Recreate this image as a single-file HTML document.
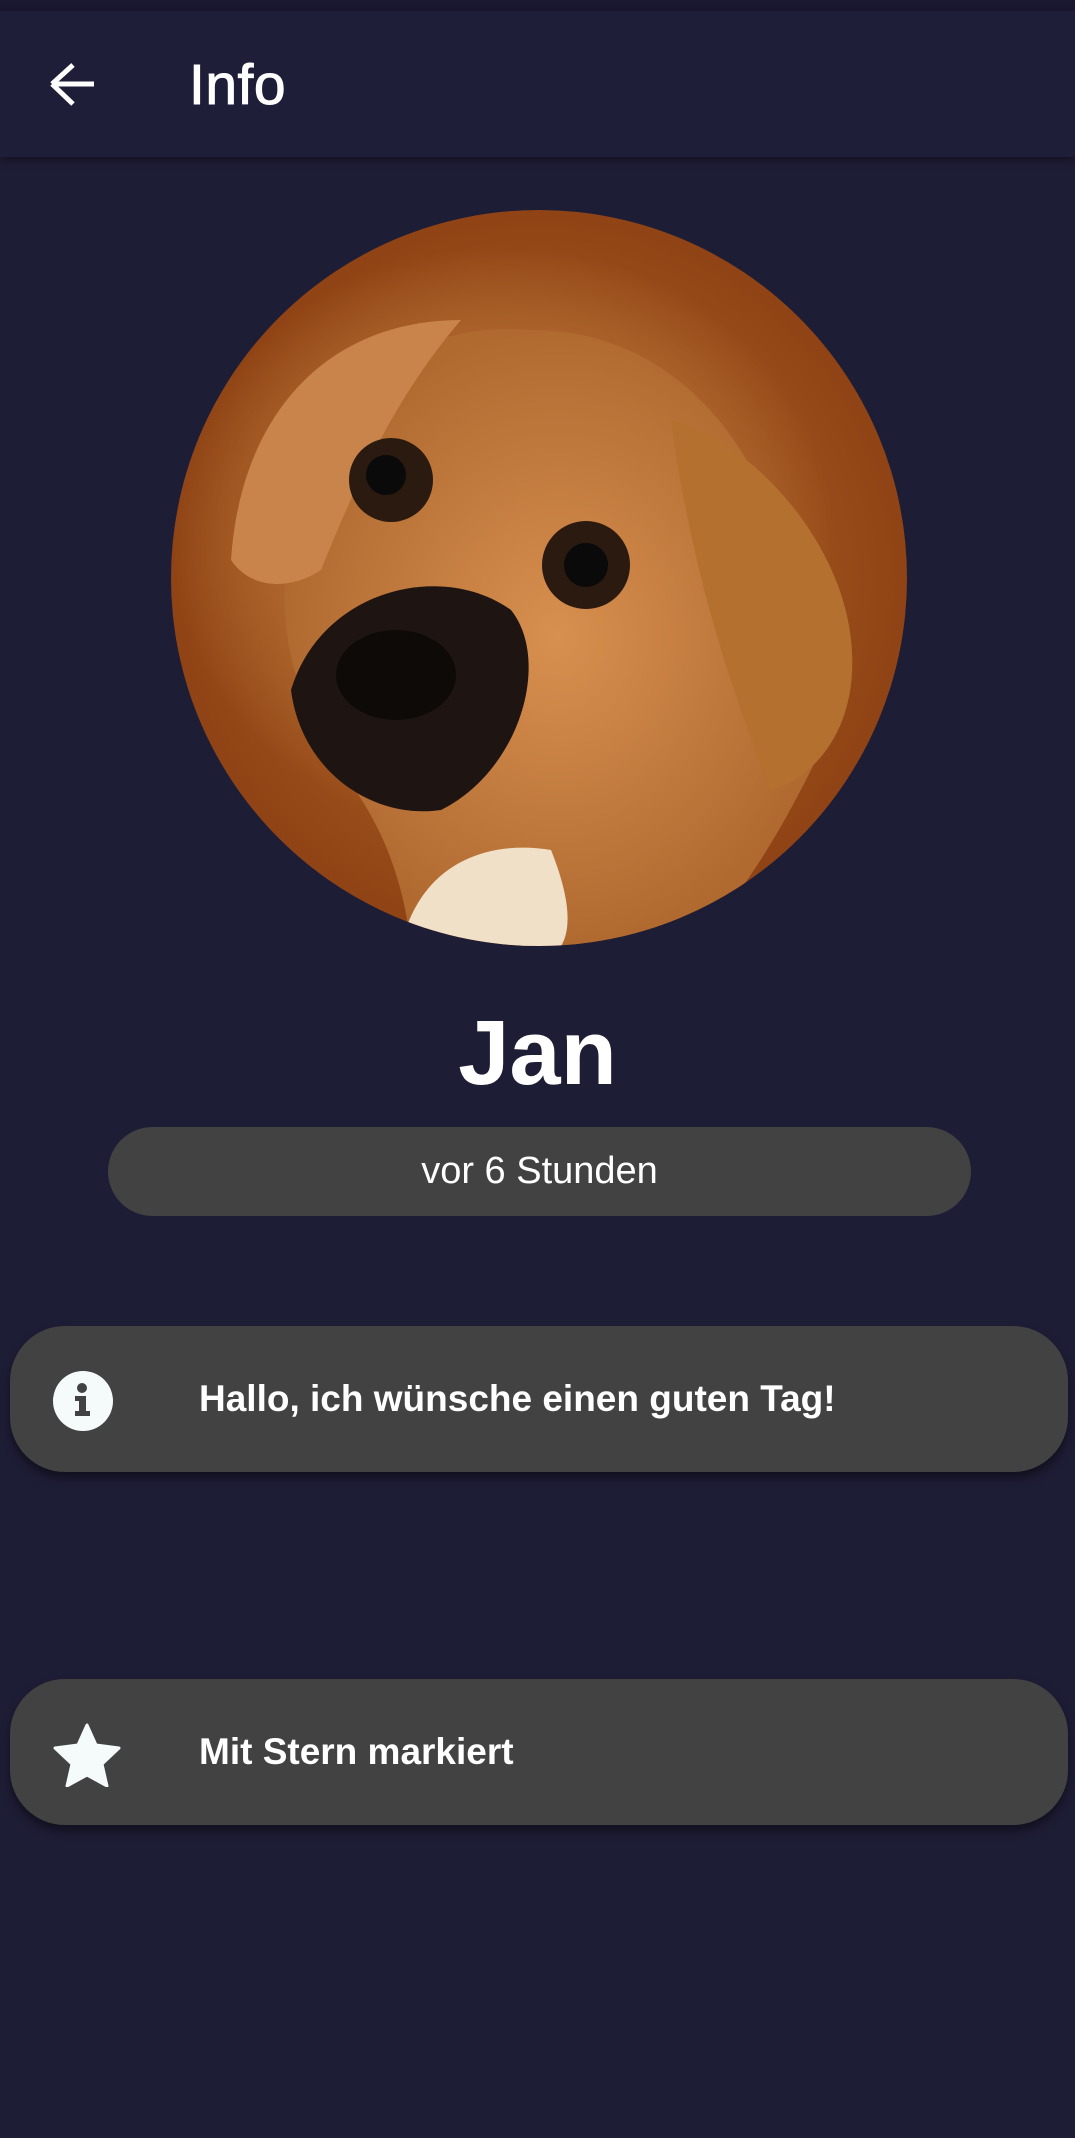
<!DOCTYPE html>
<html><head><meta charset="utf-8"><style>
*{margin:0;padding:0;box-sizing:border-box}
body{width:1075px;height:2138px;background:#1e1d36;font-family:"Liberation Sans",Roboto,sans-serif;color:#fff;position:relative;overflow:hidden}
.status{position:absolute;left:0;top:0;width:1075px;height:11px;background:#191830}
.bar{position:absolute;left:0;top:11px;width:1075px;height:146px;background:#1f1e38;box-shadow:0 4px 8px rgba(0,0,0,.35)}
.title{position:absolute;left:189px;top:39px;font-size:57px;line-height:70px;font-weight:500;letter-spacing:.5px;-webkit-text-stroke:1px #fff}
.circle{position:absolute;left:171px;top:210px;width:736px;height:736px;border-radius:50%;overflow:hidden;
background:radial-gradient(ellipse 45% 40% at 45% 45%,#c07a3e 0%,#b06a30 60%,transparent 100%),radial-gradient(circle at 50% 50%,#b86c2c,#8a3e12 80%)}
.name{position:absolute;left:0;width:1075px;top:1003px;text-align:center;font-size:92px;font-weight:bold;line-height:100px}
.pill{position:absolute;left:108px;top:1127px;width:863px;height:89px;border-radius:45px;background:#424242;text-align:center;font-size:38px;line-height:89px}
.card{position:absolute;left:10px;width:1058px;height:146px;border-radius:55px;background:#424242;box-shadow:0 6px 10px rgba(0,0,0,.45)}
.card span{position:absolute;left:189px;top:0;line-height:146px;font-size:37px;font-weight:bold}
</style></head><body>
<div class="status"></div>
<div class="bar">
<svg style="position:absolute;left:48px;top:52px" width="50" height="46" viewBox="0 0 50 46"><path d="M4 21H46M4 21L25 2M4 21L25 41" stroke="#fff" stroke-width="5" fill="none"/></svg>
<div class="title">Info</div>
</div>
<div class="circle">
<svg width="736" height="736" viewBox="0 0 736 736">
<defs><radialGradient id="g" cx="50%" cy="50%" r="50%"><stop offset="0" stop-color="#d89050"/><stop offset="1" stop-color="#b06a30"/></radialGradient></defs>
<path d="M120 330 C150 170 250 110 360 120 C480 120 560 200 600 300 C650 360 680 480 640 560 C600 640 560 700 520 736 L240 736 C230 650 200 600 170 560 C130 500 100 420 120 330Z" fill="url(#g)"/>
<path d="M60 350 C70 200 160 110 290 110 C230 180 190 260 150 360 C120 380 80 380 60 350Z" fill="#c8844a"/>
<path d="M500 210 C580 230 670 330 680 430 C690 520 640 570 600 580 C560 480 520 360 500 210Z" fill="#b4702e"/>
<ellipse cx="220" cy="270" rx="42" ry="42" fill="#2a1a10"/><ellipse cx="215" cy="265" rx="20" ry="20" fill="#0a0a0a"/>
<ellipse cx="415" cy="355" rx="44" ry="44" fill="#2a1a10"/><ellipse cx="415" cy="355" rx="22" ry="22" fill="#0a0a0a"/>
<path d="M120 480 C150 380 270 350 340 400 C380 450 350 560 270 600 C200 610 130 560 120 480Z" fill="#1e1512"/>
<ellipse cx="225" cy="465" rx="60" ry="45" fill="#0e0a08"/>
<path d="M230 736 C250 650 320 630 380 640 C400 690 400 720 390 736Z" fill="#f0e0c8"/>
</svg>
</div>
<div class="name">Jan</div>
<div class="pill">vor 6 Stunden</div>
<div class="card" style="top:1326px">
<svg style="position:absolute;left:43px;top:45px" width="60" height="60" viewBox="0 0 60 60"><circle cx="30" cy="30" r="30" fill="#f5fbfa"/><circle cx="29" cy="17" r="5" fill="#424242"/><path d="M22 25H33V40H37V45H22V40H26V30H22Z" fill="#424242"/></svg>
<span>Hallo, ich wünsche einen guten Tag!</span>
</div>
<div class="card" style="top:1679px">
<svg style="position:absolute;left:43px;top:44px" width="68" height="64" viewBox="0 0 68 64"><path d="M34 2 L43 22 L66 25 L49 41 L54 63 L34 52 L14 63 L19 41 L2 25 L25 22Z" fill="#f5fbfa" stroke="#f5fbfa" stroke-width="3" stroke-linejoin="round"/></svg>
<span>Mit Stern markiert</span>
</div>
</body></html>
